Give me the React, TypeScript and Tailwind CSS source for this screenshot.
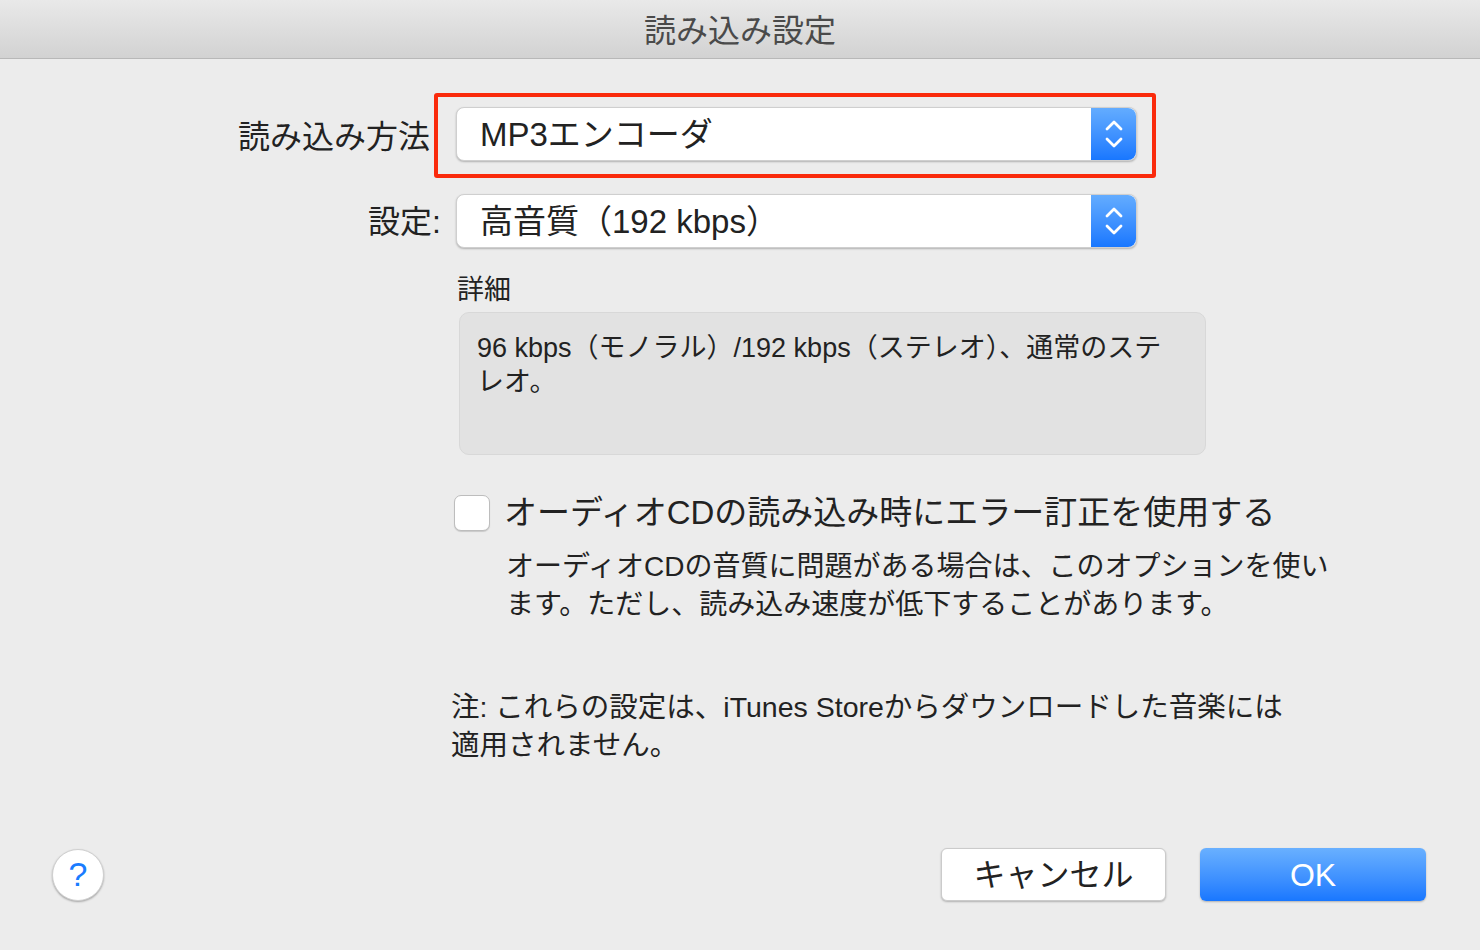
const FONT = {
  fontFamily: '"Liberation Sans", "Noto Sans CJK JP", sans-serif',
};

function Stepper() {
  return (
    <div className="flex h-full w-[45px] items-center justify-center rounded-r-[8px] bg-gradient-to-b from-[#63acff] to-[#1877ff]">
      <svg width="22" height="36" viewBox="0 0 22 36" fill="none">
        <path d="M4 13 L11 6 L18 13" stroke="white" strokeWidth="2.8" strokeLinecap="round" strokeLinejoin="round" />
        <path d="M4 23 L11 30 L18 23" stroke="white" strokeWidth="2.8" strokeLinecap="round" strokeLinejoin="round" />
      </svg>
    </div>
  );
}

function PopupButton({ label }: { label: string }) {
  return (
    <div className="flex h-[54px] w-[681px] items-center rounded-[8px] border border-[#cfcfcf] bg-white shadow-[0_1px_2px_rgba(0,0,0,0.25)]">
      <span className="flex-1 pl-[23px] text-[33px] leading-none text-[#222]">{label}</span>
      <Stepper />
    </div>
  );
}

export default function App() {
  return (
    <div className="h-[950px] w-[1480px] overflow-hidden bg-[#ececec] text-[#222]" style={FONT}>
      {/* title bar */}
      <div className="flex h-[59px] items-center justify-center border-b border-[#b8b8b8] bg-gradient-to-b from-[#e9e9e9] to-[#d2d2d2]">
        <span className="pt-[4px] text-[32px] text-[#4a4a4a]">読み込み設定</span>
      </div>

      {/* import method */}
      <div className="mt-[34px] flex items-center">
        <div className="w-[430px] pt-[2px] text-right text-[32px] leading-none">読み込み方法</div>
        <div className="ml-[4px] rounded-[3px] border-4 border-[#fa2a0c] pb-[13px] pl-[18px] pr-[15px] pt-[10px]">
          <PopupButton label="MP3エンコーダ" />
        </div>
      </div>

      {/* setting */}
      <div className="mt-[16px] flex items-center">
        <div className="w-[441px] pt-[2px] text-right text-[32px] leading-none">設定:</div>
        <div className="ml-[15px]">
          <PopupButton label="高音質（192 kbps）" />
        </div>
      </div>

      {/* details */}
      <div className="mt-[25px] pl-[457px] text-[27px] leading-[34px]">詳細</div>
      <div className="ml-[459px] mt-[5px] h-[143px] w-[747px] rounded-[10px] border border-[#d8d8d8] bg-[#e2e2e2] px-[17px] pt-[18px] text-[27px] leading-[34px]">
        96 kbps（モノラル）/192 kbps（ステレオ）、通常のステ
        <br />
        レオ。
      </div>

      {/* error correction */}
      <div className="ml-[454px] mt-[38px] flex items-center gap-[14px]">
        <div className="h-[36px] w-[36px] rounded-[7px] border border-[#bdbdbd] bg-white shadow-[0_1px_1px_rgba(0,0,0,0.15)]" />
        <span className="text-[33px] leading-[40px]">オーディオCDの読み込み時にエラー訂正を使用する</span>
      </div>
      <div className="mt-[15px] pl-[506px] text-[28px] leading-[38px]">
        オーディオCDの音質に問題がある場合は、このオプションを使い
        <br />
        ます。ただし、読み込み速度が低下することがあります。
      </div>

      {/* note */}
      <div className="mt-[64px] pl-[451px] text-[28.5px] leading-[38px]">
        注: これらの設定は、iTunes Storeからダウンロードした音楽には
        <br />
        適用されません。
      </div>

      {/* buttons */}
      <div className="mt-[84px] flex items-center pl-[52px] pr-[54px]">
        <div className="flex h-[52px] w-[52px] items-center justify-center rounded-full border border-[#d0d0d0] bg-white text-[34px] text-[#1a7cff] shadow-[0_1px_2px_rgba(0,0,0,0.3)]">
          ?
        </div>
        <div className="flex-1" />
        <div className="flex h-[53px] w-[225px] items-center justify-center rounded-[6px] border border-[#cbcbcb] bg-white text-[32px] text-[#222] shadow-[0_1px_2px_rgba(0,0,0,0.25)]">
          キャンセル
        </div>
        <div className="ml-[34px] flex h-[53px] w-[226px] items-center justify-center rounded-[6px] bg-gradient-to-b from-[#69b0ff] to-[#1877ff] text-[32px] text-white shadow-[0_1px_2px_rgba(0,0,0,0.25)]">
          OK
        </div>
      </div>
    </div>
  );
}
